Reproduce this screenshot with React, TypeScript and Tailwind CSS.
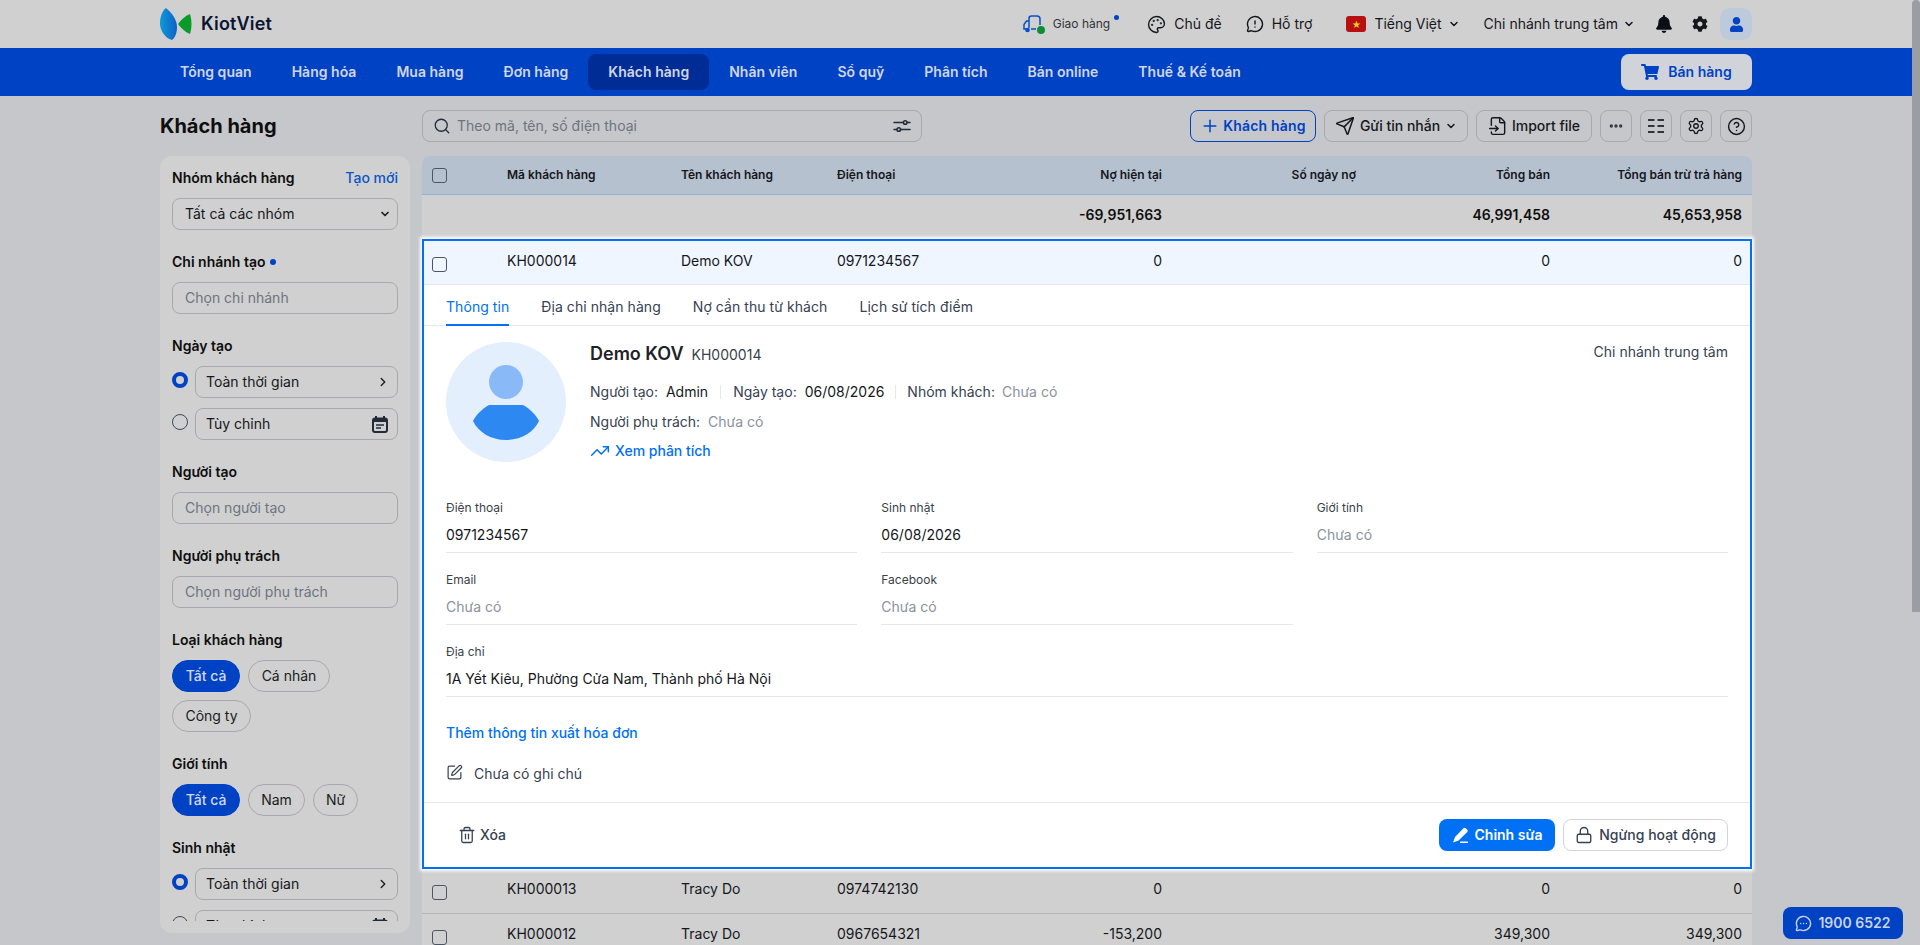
import {
  ChevronDown,
  ChevronRight,
  CircleHelp,
  Ellipsis,
  FileInput,
  Lock,
  MessageCircleMore,
  MessageCircleWarning,
  Palette,
  Plus,
  Search,
  Send,
  Settings,
  SquarePen,
  Trash2,
  TrendingUp,
} from "lucide-react";
import { FaBell, FaCog, FaShoppingCart, FaUser } from "react-icons/fa";

const NAV = ["Tổng quan", "Hàng hóa", "Mua hàng", "Đơn hàng", "Khách hàng", "Nhân viên", "Sổ quỹ", "Phân tích", "Bán online", "Thuế & Kế toán"];

const COLS = "grid grid-cols-[85px_174px_156px_160px_175px_194px_194px_192px]";
const INNER_COLS = "grid grid-cols-[83px_174px_156px_160px_175px_194px_194px_190px]";

function Checkbox({ className = "" }: { className?: string }) {
  return <span className={`block w-[15px] h-[15px] rounded-[3px] border border-[#4b5563] ${className}`} />;
}

function Logo() {
  return (
    <svg width="34" height="34" viewBox="0 0 34 34" className="shrink-0">
      <defs>
        <linearGradient id="lens" x1="0" y1="0" x2="1" y2="0">
          <stop offset="0" stopColor="#0d9ad6" />
          <stop offset="1" stopColor="#1060c8" />
        </linearGradient>
      </defs>
      <path d="M6 1 C12 6 17 13 17 20 C17 26 15 31 12 33 C5 31 0 24 0 16 C0 10 2 4 6 1 Z" fill="url(#lens)" />
      <path d="M18 17 C21 13 25 9 30 7 C32 13 32 21 30 27 C25 25 21 21 18 17 Z" fill="#0a9a2a" />
    </svg>
  );
}

function Truck() {
  return (
    <span className="relative block w-[22px] h-[20px]">
      <svg width="22" height="20" viewBox="0 0 22 20" fill="none" stroke="#0a4fc8" strokeWidth="1.5">
        <path d="M6 14V4.5A2.5 2.5 0 0 1 8.5 2H14a3 3 0 0 1 3 3v6" />
        <path d="M6 7H3.5L1 10.5V15h2" />
        <path d="M8 15h5" />
        <circle cx="4.5" cy="16" r="1.6" fill="#0a4fc8" />
      </svg>
      <span className="absolute right-0 bottom-0 w-[8px] h-[8px] rounded-full bg-[#0a8f35]" />
    </span>
  );
}

function FilterIcon() {
  return (
    <svg width="18" height="18" viewBox="0 0 18 18" fill="none" stroke="#222b38" strokeWidth="1.5" strokeLinecap="round">
      <path d="M1 5.5h9.5M14 5.5h3" />
      <circle cx="12.2" cy="5.5" r="1.8" />
      <path d="M1 12.5h3M7.5 12.5H17" />
      <circle cx="5.8" cy="12.5" r="1.8" />
    </svg>
  );
}

function CalendarIcon() {
  return (
    <svg width="16" height="17" viewBox="0 0 16 17" className="-mr-[1px]">
      <path d="M4 0v3M12 0v3" stroke="#222b38" strokeWidth="2" />
      <rect x="1" y="2.5" width="14" height="13.5" rx="2" fill="none" stroke="#222b38" strokeWidth="2" />
      <rect x="1" y="2.5" width="14" height="3.5" fill="#222b38" />
      <path d="M4 9h8M4 12h5" stroke="#222b38" strokeWidth="1.5" />
    </svg>
  );
}

function PencilIcon() {
  return (
    <svg width="17" height="17" viewBox="0 0 17 17" fill="#ffffff">
      <path d="M11.5 1.2a1.6 1.6 0 0 1 2.2 0l1.6 1.6a1.6 1.6 0 0 1 0 2.2L6.6 13.6 1 15.6l2-5.6z" />
      <rect x="8" y="14.6" width="8" height="1.5" rx="0.7" />
    </svg>
  );
}

function FieldLabel({ children }: { children: React.ReactNode }) {
  return <div className="h-5 mb-[10px] text-sm leading-5 font-semibold text-[#0e0e0e]">{children}</div>;
}

function BoxInput({ children, muted = false, tight = false }: { children: React.ReactNode; muted?: boolean; tight?: boolean }) {
  return (
    <div
      className={`flex items-center justify-between h-[32px] rounded-lg border border-[#a8a9ae] text-sm ${tight ? "px-[10px]" : "px-3"} ${
        muted ? "text-[#6d7480]" : "text-[#15171c]"
      }`}
    >
      {children}
    </div>
  );
}

function RadioRow({ checked, children }: { checked?: boolean; children: React.ReactNode }) {
  return (
    <div className="flex items-start gap-[7px]">
      <span
        className={`block shrink-0 mt-[6px] w-4 h-4 rounded-full ${checked ? "border-[4px] border-[#0042c4]" : "border border-[#3f4a5a]"}`}
      />
      <div className="flex-1 min-w-0">
        <BoxInput tight>{children}</BoxInput>
      </div>
    </div>
  );
}

function Pill({ active, className = "", children }: { active?: boolean; className?: string; children: React.ReactNode }) {
  return (
    <span
      className={`h-[32px] px-3 rounded-full text-sm flex items-center justify-center border ${className} ${
        active ? "bg-[#0042c4] border-[#0042c4] text-[#d3d9e6] font-medium" : "border-[#a8a9ae] text-[#1a1c22]"
      }`}
    >
      {children}
    </span>
  );
}

function DateOptions() {
  return (
    <div className="flex flex-col gap-[10px]">
      <RadioRow checked>
        <span>Toàn thời gian</span>
        <ChevronRight size={14} strokeWidth={2.5} className="text-[#222] -mr-[3px]" />
      </RadioRow>
      <RadioRow>
        <span>Tùy chỉnh</span>
        <CalendarIcon />
      </RadioRow>
    </div>
  );
}

function Sidebar() {
  return (
    <aside className="h-[777px] w-[250px] rounded-xl bg-[#d0d0d0] overflow-hidden py-3">
      <div className="h-[753px] overflow-hidden px-3 flex flex-col gap-[22px]">
        <div>
          <div className="flex justify-between h-5 mb-[10px] text-sm leading-5 font-semibold text-[#0e0e0e]">
            <span>Nhóm khách hàng</span>
            <span className="font-medium text-[#0a55c6]">Tạo mới</span>
          </div>
          <BoxInput>
            <span>Tất cả các nhóm</span>
            <ChevronDown size={12} strokeWidth={3.5} className="text-[#222] -mr-[6px]" />
          </BoxInput>
        </div>
        <div>
          <div className="flex items-center gap-1 h-5 mb-[10px] text-sm leading-5 font-semibold text-[#0e0e0e]">
            Chi nhánh tạo
            <span className="w-[6px] h-[6px] rounded-full bg-[#0042c4]" />
          </div>
          <BoxInput muted>Chọn chi nhánh</BoxInput>
        </div>
        <div>
          <FieldLabel>Ngày tạo</FieldLabel>
          <DateOptions />
        </div>
        <div>
          <FieldLabel>Người tạo</FieldLabel>
          <BoxInput muted>Chọn người tạo</BoxInput>
        </div>
        <div>
          <FieldLabel>Người phụ trách</FieldLabel>
          <BoxInput muted>Chọn người phụ trách</BoxInput>
        </div>
        <div>
          <FieldLabel>Loại khách hàng</FieldLabel>
          <div className="flex flex-wrap gap-2">
            <Pill active className="w-[68px]">Tất cả</Pill>
            <Pill className="w-[82px]">Cá nhân</Pill>
            <Pill className="w-[79px]">Công ty</Pill>
          </div>
        </div>
        <div>
          <FieldLabel>Giới tính</FieldLabel>
          <div className="flex flex-wrap gap-2">
            <Pill active className="w-[68px]">Tất cả</Pill>
            <Pill className="w-[57px]">Nam</Pill>
            <Pill className="w-[45px]">Nữ</Pill>
          </div>
        </div>
        <div>
          <FieldLabel>Sinh nhật</FieldLabel>
          <DateOptions />
        </div>
      </div>
    </aside>
  );
}

function ToolButton({ children, className = "" }: { children: React.ReactNode; className?: string }) {
  return (
    <span className={`h-[32px] rounded-lg border border-[#a8a9ae] flex items-center justify-center text-sm font-medium text-[#15171c] ${className}`}>
      {children}
    </span>
  );
}

function DataRow({ code, name, phone, debt, sales, net }: { code: string; name: string; phone: string; debt: string; sales: string; net: string }) {
  return (
    <div className={`${COLS} items-start h-[45px] border-b border-[#b5b5b5] bg-[#d0d0d0] text-sm leading-5 text-[#15171c]`}>
      <div className="pl-[10px] pt-[16px]">
        <Checkbox />
      </div>
      <div className="pt-[10px]">{code}</div>
      <div className="pt-[10px]">{name}</div>
      <div className="pt-[10px]">{phone}</div>
      <div className="pt-[10px] pr-[10px] text-right">{debt}</div>
      <div />
      <div className="pt-[10px] pr-[10px] text-right">{sales}</div>
      <div className="pt-[10px] pr-[10px] text-right">{net}</div>
    </div>
  );
}

function InfoField({ label, value, empty, className = "" }: { label: string; value: string; empty?: boolean; className?: string }) {
  return (
    <div className={`h-[72px] ${className}`}>
      <div className="pt-[1px] h-[17px] text-xs leading-4 text-[#3a3f47]">{label}</div>
      <div className={`mt-[9px] h-5 text-sm leading-5 ${empty ? "text-[#8a929e]" : "text-[#15171c]"}`}>{value}</div>
      <div className="mt-[7px] border-b border-[#e5e7eb]" />
    </div>
  );
}

function ExpandedRow() {
  return (
    <div className="relative z-10 h-[630px] border-2 border-[#0070f4] bg-white shadow-[0_0_3px_2px_#ffffff]">
      <div className={`${INNER_COLS} items-start h-[44px] border-b border-[#e5e7eb] bg-[#f0f6ff] text-sm leading-5 text-[#15171c]`}>
        <div className="pl-[8px] pt-[16px]">
          <Checkbox />
        </div>
        <div className="pt-[10px]">KH000014</div>
        <div className="pt-[10px]">Demo KOV</div>
        <div className="pt-[10px]">0971234567</div>
        <div className="pt-[10px] pr-[10px] text-right">0</div>
        <div />
        <div className="pt-[10px] pr-[10px] text-right">0</div>
        <div className="pt-[10px] pr-[8px] text-right">0</div>
      </div>

      {/* Tabs */}
      <div className="flex gap-8 h-[41px] px-[22px] border-b border-[#e5e7eb] text-sm tracking-[0.06px] text-[#374151]">
        <span className="h-[41px] pt-[12px] border-b-2 border-[#0070f4] text-[#0070f4]">Thông tin</span>
        <span className="pt-[12px]">Địa chỉ nhận hàng</span>
        <span className="pt-[12px]">Nợ cần thu từ khách</span>
        <span className="pt-[12px]">Lịch sử tích điểm</span>
      </div>

      <div className="px-[22px]">
        <div className="flex gap-6 pt-4 h-[173px]">
          <div className="relative w-[120px] h-[120px] shrink-0 rounded-full bg-[#e3effc] overflow-hidden">
            <span className="absolute left-[43px] top-[23px] w-[34px] h-[34px] rounded-full bg-[#8ab9f8]" />
            <svg className="absolute left-[27px] top-[62px]" width="66" height="36" viewBox="0 0 66 36">
              <path d="M16 1 H50 C57 5 63 11 66 17 C61 28 48 36 33 36 C18 36 5 28 0 17 C3 11 9 5 16 1 Z" fill="#2e88f2" />
            </svg>
          </div>
          <div className="flex-1 min-w-0 text-sm leading-5">
            <div className="flex items-center justify-between h-6">
              <div className="flex items-baseline gap-2">
                <span className="text-lg font-semibold text-[#1f2328]">Demo KOV</span>
                <span className="text-[#3a3f47]">KH000014</span>
              </div>
              <span className="text-[#374151] self-start">Chi nhánh trung tâm</span>
            </div>
            <div className="flex items-center mt-4 text-[#374151]">
              <span>Người tạo:</span>
              <span className="ml-2 text-[#15171c]">Admin</span>
              <span className="mx-3 h-[14px] border-l border-[#e5e7eb]" />
              <span>Ngày tạo:</span>
              <span className="ml-2 text-[#15171c]">06/08/2026</span>
              <span className="mx-[11px] h-[14px] border-l border-[#e5e7eb]" />
              <span>Nhóm khách:</span>
              <span className="ml-[7px] text-[#8a929e]">Chưa có</span>
            </div>
            <div className="flex items-center mt-[10px] text-[#374151]">
              <span>Người phụ trách:</span>
              <span className="ml-2 text-[#8a929e]">Chưa có</span>
            </div>
            <div className="flex items-center gap-[5px] mt-[9px] font-medium text-[#0070f4]">
              <TrendingUp size={20} strokeWidth={1.8} />
              Xem phân tích
            </div>
          </div>
        </div>

        <div className="grid grid-cols-3 gap-x-6">
          <InfoField label="Điện thoại" value="0971234567" />
          <InfoField label="Sinh nhật" value="06/08/2026" />
          <InfoField label="Giới tính" value="Chưa có" empty />
          <InfoField label="Email" value="Chưa có" empty />
          <InfoField label="Facebook" value="Chưa có" empty />
          <div />
          <InfoField label="Địa chỉ" value="1A Yết Kiêu, Phường Cửa Nam, Thành phố Hà Nội" className="col-span-3" />
        </div>

        <div className="mt-2 h-5 text-sm leading-5 font-medium text-[#0070f4]">Thêm thông tin xuất hóa đơn</div>
        <div className="flex items-center gap-[11px] mt-[21px] h-5 text-sm text-[#374151]">
          <SquarePen size={17} strokeWidth={1.7} className="-mt-[3px]" />
          Chưa có ghi chú
        </div>
      </div>

      <div className="flex items-center justify-between h-[65px] mt-[18px] pl-[34px] pr-[22px] border-t border-[#e5e7eb]">
        <span className="flex items-center gap-[4px] text-sm font-medium text-[#374151]">
          <Trash2 size={18} strokeWidth={1.7} />
          Xóa
        </span>
        <div className="flex gap-2">
          <span className="flex items-center gap-[6px] w-[116px] h-[32px] justify-center rounded-lg bg-[#0070f4] text-sm font-semibold text-white">
            <PencilIcon />
            Chỉnh sửa
          </span>
          <span className="flex items-center gap-[6px] w-[165px] h-[32px] justify-center rounded-lg border border-[#d1d5db] text-sm font-medium text-[#374151]">
            <Lock size={18} strokeWidth={1.8} />
            Ngừng hoạt động
          </span>
        </div>
      </div>
    </div>
  );
}

export default function App() {
  return (
    <div className="relative h-[945px] overflow-hidden bg-[#c6c7ca] font-['Inter',sans-serif]">
      {/* Top bar */}
      <header className="h-12 bg-[#d0d0d0]">
        <div className="flex items-center h-12 w-[1592px] ml-[160px]">
          <Logo />
          <span className="ml-[7px] text-lg tracking-[0.2px] font-semibold text-[#0b1533]">KiotViet</span>
          <div className="ml-auto flex items-center text-sm text-[#15171c]">
            <Truck />
            <span className="ml-2 text-xs text-[#30343a]">Giao hàng</span>
            <span className="mb-[14px] ml-1 w-[5px] h-[5px] rounded-full bg-[#0042c4]" />
            <Palette size={19} strokeWidth={1.8} className="ml-[28px]" />
            <span className="ml-2">Chủ đề</span>
            <MessageCircleWarning size={18} strokeWidth={1.9} className="ml-[24px]" />
            <span className="ml-2">Hỗ trợ</span>
            <span className="ml-[34px] flex items-center justify-center w-[20px] h-[16px] rounded-[3px] bg-[#b81010] text-[#e8d020] text-[9px] leading-none">★</span>
            <span className="ml-2">Tiếng Việt</span>
            <ChevronDown size={12} strokeWidth={3} className="ml-[6px]" />
            <span className="ml-[24px]">Chi nhánh trung tâm</span>
            <ChevronDown size={12} strokeWidth={3} className="ml-[5px]" />
            <FaBell size={18} className="ml-[20px] text-[#0b0e14]" />
            <FaCog size={16} className="ml-[19px] text-[#15171c]" />
            <span className="ml-[12px] w-[32px] h-[32px] rounded-[10px] bg-[#bccadb] flex items-center justify-center">
              <FaUser size={15} className="text-[#0042c4]" />
            </span>
          </div>
        </div>
      </header>

      {/* Main nav */}
      <nav className="h-12 bg-[#0042c4]">
        <div className="flex items-center justify-between h-12 w-[1592px] ml-[160px]">
          <div className="flex items-center">
            {NAV.map((item) => (
              <span
                key={item}
                className={`h-9 px-5 flex items-center rounded-lg text-sm tracking-[0.02px] font-semibold text-[#d0d6e4] ${item === "Khách hàng" ? "bg-[#002c96]" : ""}`}
              >
                {item}
              </span>
            ))}
          </div>
          <span className="flex items-center justify-center gap-[9px] w-[131px] h-9 rounded-lg bg-[#d0d3da] text-sm font-semibold text-[#0042c4]">
            <FaShoppingCart size={18} />
            Bán hàng
          </span>
        </div>
      </nav>

      <div className="w-[1592px] ml-[160px]">
        <div className="flex items-center h-[32px] mt-[14px] mb-[14px]">
          <h1 className="w-[262px] text-xl font-bold text-[#0e0e0e]">Khách hàng</h1>
          <div className="flex items-center w-[500px] h-[32px] px-[10px] gap-[6px] rounded-lg border border-[#a8a9ae] text-sm text-[#6d7480]">
            <Search size={18} strokeWidth={1.7} className="text-[#222b38]" />
            <span className="flex-1">Theo mã, tên, số điện thoại</span>
            <FilterIcon />
          </div>
          <div className="ml-auto flex items-center gap-2">
            <span className="h-[32px] w-[126px] rounded-lg border border-[#0042c4] flex items-center justify-center gap-[3px] text-sm tracking-[0.2px] font-semibold text-[#0042c4]">
              <Plus size={20} strokeWidth={1.8} />
              Khách hàng
            </span>
            <ToolButton className="w-[144px] gap-[5px]">
              <Send size={20} strokeWidth={1.8} />
              Gửi tin nhắn
              <ChevronDown size={12} strokeWidth={3} />
            </ToolButton>
            <ToolButton className="w-[116px] gap-[4px]">
              <FileInput size={20} strokeWidth={1.7} />
              Import file
            </ToolButton>
            <ToolButton className="w-[32px]">
              <Ellipsis size={16} strokeWidth={3} className="text-[#30343a]" />
            </ToolButton>
            <ToolButton className="w-[32px]">
              <svg width="16" height="14" viewBox="0 0 16 14" fill="#30343a">
                <rect x="0" y="0" width="6.5" height="2" />
                <rect x="9.5" y="0" width="6.5" height="2" />
                <rect x="0" y="6" width="6.5" height="2" />
                <rect x="9.5" y="6" width="6.5" height="2" />
                <rect x="0" y="12" width="6.5" height="2" />
                <rect x="9.5" y="12" width="6.5" height="2" />
              </svg>
            </ToolButton>
            <ToolButton className="w-[32px]">
              <Settings size={18} strokeWidth={1.8} />
            </ToolButton>
            <ToolButton className="w-[32px]">
              <CircleHelp size={19} strokeWidth={1.8} />
            </ToolButton>
          </div>
        </div>

        <div className="flex gap-3 items-start">
          <Sidebar />
          <main className="w-[1330px]">
            <div className={`${COLS} items-center h-[39px] rounded-t-lg bg-[#b5c1cf] border-b border-[#8fb1dc] text-xs font-semibold text-[#15171c]`}>
              <div className="pl-[10px]">
                <Checkbox />
              </div>
              <div>Mã khách hàng</div>
              <div>Tên khách hàng</div>
              <div>Điện thoại</div>
              <div className="pr-[10px] text-right">Nợ hiện tại</div>
              <div className="pr-[10px] text-right">Số ngày nợ</div>
              <div className="pr-[10px] text-right">Tổng bán</div>
              <div className="pr-[10px] text-right">Tổng bán trừ trả hàng</div>
            </div>
            <div className={`${COLS} items-start h-[44px] bg-[#d0d0d0] text-sm leading-5 font-semibold text-[#0e0e0e]`}>
              <div className="col-span-4" />
              <div className="pt-[10px] pr-[10px] text-right">-69,951,663</div>
              <div />
              <div className="pt-[10px] pr-[10px] text-right">46,991,458</div>
              <div className="pt-[10px] pr-[10px] text-right">45,653,958</div>
            </div>
            <ExpandedRow />
            <DataRow code="KH000013" name="Tracy Do" phone="0974742130" debt="0" sales="0" net="0" />
            <DataRow code="KH000012" name="Tracy Do" phone="0967654321" debt="-153,200" sales="349,300" net="349,300" />
          </main>
        </div>
      </div>

      {/* Hotline */}
      <span className="absolute left-[1783px] top-[907px] flex items-center justify-center gap-[6px] w-[120px] h-[32px] rounded-lg bg-[#0042c4] text-sm font-semibold text-[#c9d3e8]">
        <MessageCircleMore size={17} strokeWidth={2} />
        1900 6522
      </span>

      {/* Page scrollbar */}
      <span className="absolute right-0 top-0 w-2 h-[612px] rounded-t-md bg-[#9a9da3]" />
    </div>
  );
}
